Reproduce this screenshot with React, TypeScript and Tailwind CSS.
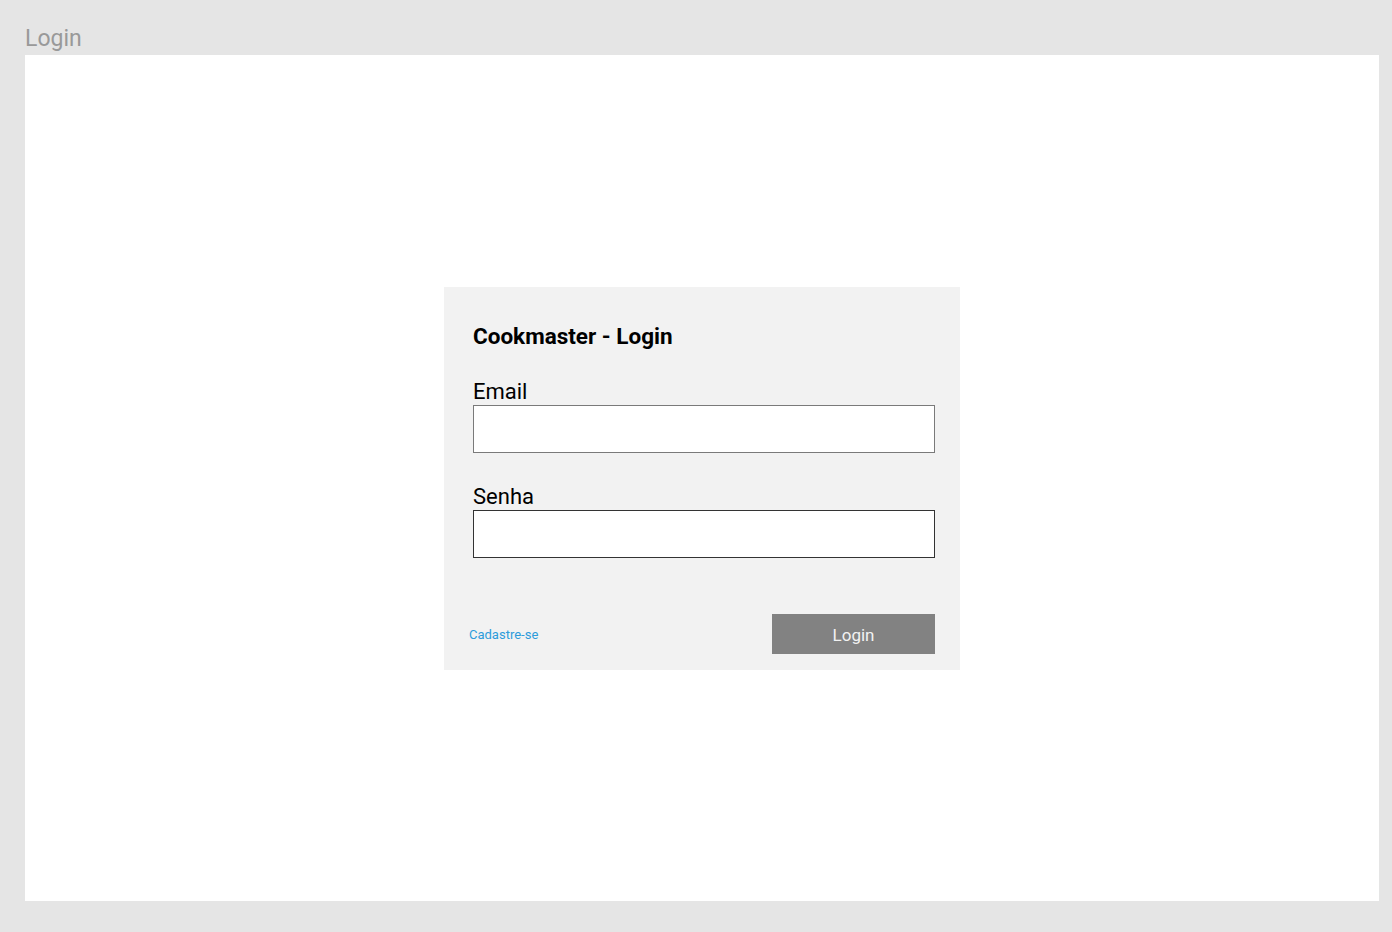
export default function App() {
  return (
    <div className="h-[932px] w-full bg-[#e5e5e5] pl-[25px] pr-[13px] font-['Roboto',sans-serif] flex flex-col">
      <div className="h-[55px] pt-[25px] text-[23px] leading-[27px] text-[#999999]">Login</div>
      <div className="h-[846px] bg-white flex items-center justify-center">
        <div className="w-[516px] h-[383px] bg-[#f2f2f2] pt-[36px] pl-[29px] pr-[25px] pb-[16px] flex flex-col">
          <h1 className="text-[22.5px] leading-[26px] font-bold text-black">Cookmaster - Login</h1>
          <label className="mt-[30px] text-[22px] leading-[26px] text-black">Email</label>
          <input type="text" className="h-[48px] w-full bg-white border border-[#7a7a7a] outline-none" />
          <label className="mt-[31px] text-[22px] leading-[26px] text-black">Senha</label>
          <input type="password" className="h-[48px] w-full bg-white border border-[#333333] outline-none" />
          <div className="mt-auto flex items-center justify-between">
            <a className="-ml-[4px] mt-[2px] text-[13px] text-[#2d9cdb] cursor-pointer">Cadastre-se</a>
            <button className="w-[163px] h-[40px] bg-[#828282] text-[#f2f2f2] text-[17px] leading-[40px] pt-[1px]">
              Login
            </button>
          </div>
        </div>
      </div>
    </div>
  );
}
